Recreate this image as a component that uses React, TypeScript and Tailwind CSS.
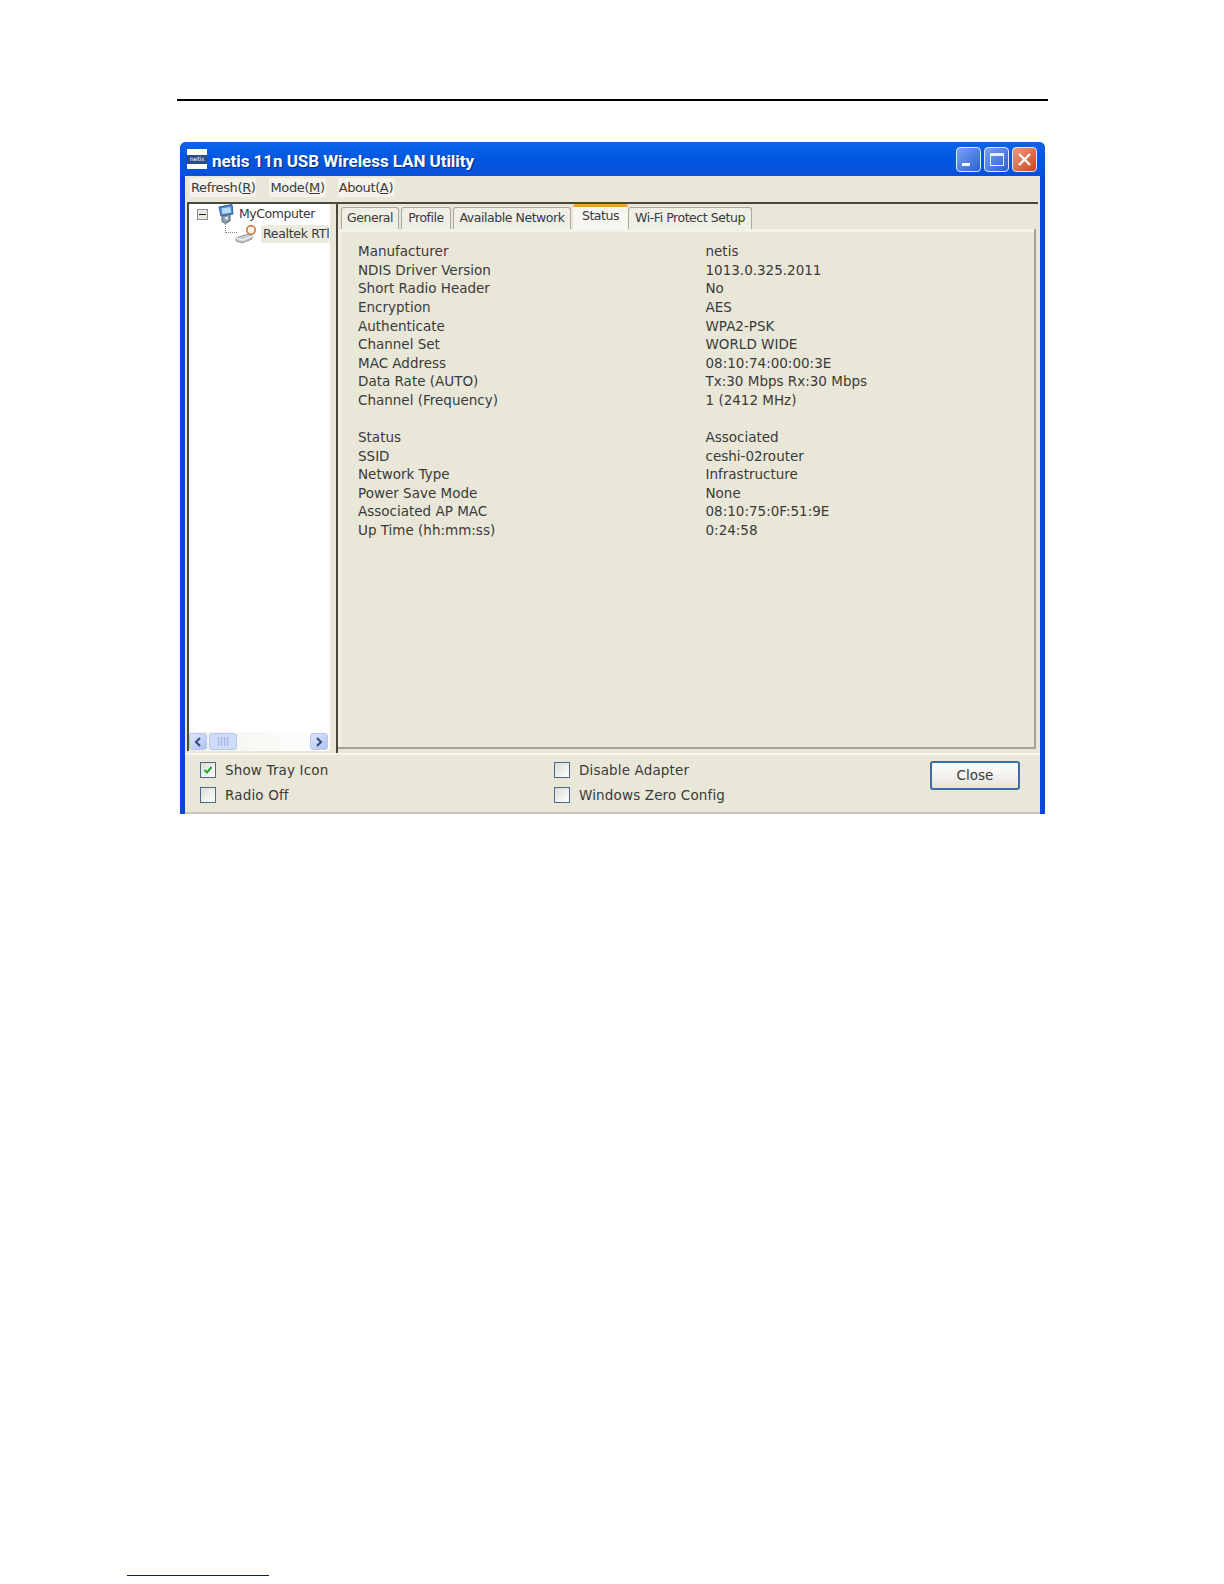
import React from "react";

const driverRows = [
  ["Manufacturer", "netis"],
  ["NDIS Driver Version", "1013.0.325.2011"],
  ["Short Radio Header", "No"],
  ["Encryption", "AES"],
  ["Authenticate", "WPA2-PSK"],
  ["Channel Set", "WORLD WIDE"],
  ["MAC Address", "08:10:74:00:00:3E"],
  ["Data Rate (AUTO)", "Tx:30 Mbps Rx:30 Mbps"],
  ["Channel (Frequency)", "1 (2412 MHz)"],
];

const linkRows = [
  ["Status", "Associated"],
  ["SSID", "ceshi-02router"],
  ["Network Type", "Infrastructure"],
  ["Power Save Mode", "None"],
  ["Associated AP MAC", "08:10:75:0F:51:9E"],
  ["Up Time (hh:mm:ss)", "0:24:58"],
];

function StatusRows({ rows }: { rows: string[][] }) {
  return (
    <div>
      {rows.map(([label, value]) => (
        <div key={label} className="flex h-[18.6px] items-center">
          <span className="w-[347.5px] shrink-0">{label}</span>
          <span>{value}</span>
        </div>
      ))}
    </div>
  );
}

function Tab({ label, width }: { label: string; width: string }) {
  return (
    <div className={`flex h-[22px] items-center justify-center rounded-t-[3px] border border-b-0 border-[#a9a89c] bg-[#f0efe6] whitespace-nowrap text-[12.5px] tracking-[-0.45px] ${width}`}>
      {label}
    </div>
  );
}

function Check({ label, checked, className }: { label: string; checked?: boolean; className?: string }) {
  return (
    <div className={`flex h-[20px] items-center ${className ?? ""}`}>
      <div className="flex h-4 w-4 items-center justify-center border border-[#4a6a8c] bg-linear-to-br from-[#dcdcd6] to-white">
        {checked && (
          <svg width="10" height="10" viewBox="0 0 10 10">
            <path d="M1.5 5 L4 7.5 L8.5 2" fill="none" stroke="#27a82e" strokeWidth="2" />
          </svg>
        )}
      </div>
      <span className="ml-[9px] whitespace-nowrap tracking-[0.15px]">{label}</span>
    </div>
  );
}

function CaptionButton({ className, children }: { className: string; children: React.ReactNode }) {
  return (
    <div className={`flex h-[25px] w-[25px] items-center justify-center rounded-[4px] border border-[#dfe8fb] ${className}`}>
      {children}
    </div>
  );
}

function ComputerIcon() {
  return (
    <svg width="18" height="20" viewBox="0 0 18 20" className="-my-px">
      <path d="M2 3 L15 0.5 L16 10 L4 12 Z" fill="#4f8ad6" stroke="#2f5f9e" />
      <path d="M4.5 4.5 L13.5 3 L14 8.5 L5.5 10 Z" fill="#b5dcf7" />
      <path d="M5 12 L13 10.5 L13 17 L8.5 19.5 L5 17.5 Z" fill="#8f9fb4" stroke="#55657c" />
      <rect x="8" y="13" width="3" height="2.5" fill="#dfe8f2" />
    </svg>
  );
}

function AdapterIcon() {
  return (
    <svg width="26" height="20" viewBox="0 0 26 20">
      <circle cx="17" cy="6" r="4.2" fill="#fff6ec" stroke="#cf6a2a" strokeWidth="1.5" />
      <path d="M14 10 L18 12 L18 15 L8 19 L2 17 L2 14 Z" fill="#c9cbd0" stroke="#7d8087" strokeWidth="0.8" />
      <path d="M2 14 L9 16 L18 12" fill="none" stroke="#ffffff" strokeWidth="1" />
    </svg>
  );
}

function ScrollArrow({ d, className }: { d: string; className?: string }) {
  return (
    <div className={`flex h-[17px] w-[18px] items-center justify-center rounded-[3px] border border-[#b4c6ee] bg-linear-to-br from-[#dfe8fd] to-[#adc2f2] ${className ?? ""}`}>
      <svg width="8" height="10" viewBox="0 0 8 10">
        <path d={d} fill="none" stroke="#33497c" strokeWidth="2" />
      </svg>
    </div>
  );
}

export default function App() {
  return (
    <div className="flex h-[1584px] w-[1224px] flex-col overflow-hidden bg-white pt-[99px] pl-[177px] text-[13.5px] text-[#3a3a3a] font-['DejaVu_Sans',sans-serif]">
      {/* page rule */}
      <div className="h-[2px] w-[871px] bg-black" />

      {/* window */}
      <div className="mt-[41px] ml-[3px] flex h-[672px] w-[865px] flex-col rounded-t-[6px] bg-[#0a46d8]">
        {/* title bar */}
        <div className="flex h-[34px] shrink-0 items-center rounded-t-[6px] bg-linear-to-b from-[#0b63ea] via-[#0058e0] to-[#0a50d8] pr-[8px] pl-[7px]">
          <div className="flex h-[20px] w-[20px] flex-col justify-center bg-white">
            <div className="flex h-[9px] items-center justify-center bg-[#2b4a86] text-[6px] leading-none text-white">netis</div>
          </div>
          <span className="mt-[5px] ml-[5px] font-['Roboto',sans-serif] text-[17px] font-bold tracking-[-0.05px] text-white [text-shadow:1px_1px_1px_#0a2a80]">netis 11n USB Wireless LAN Utility</span>
          <div className="ml-auto flex gap-[3px]">
            <CaptionButton className="bg-linear-to-br from-[#7ba2ee] to-[#2a5fd8]">
              <div className="mt-[11px] mr-[5px] h-[3px] w-[8px] bg-white" />
            </CaptionButton>
            <CaptionButton className="bg-linear-to-br from-[#7ba2ee] to-[#2a5fd8]">
              <div className="h-[13px] w-[14px] border border-t-[3px] border-[#e8effc]" />
            </CaptionButton>
            <CaptionButton className="bg-linear-to-br from-[#ee9a7c] to-[#d03e14]">
              <svg width="15" height="15" viewBox="0 0 15 15">
                <path d="M2 2 L13 13 M13 2 L2 13" stroke="#fff" strokeWidth="2.4" />
              </svg>
            </CaptionButton>
          </div>
        </div>

        {/* client area */}
        <div className="mx-[5px] flex h-[638px] flex-col bg-[#e9e7d8]">
          {/* menu */}
          <div className="flex h-[26px] shrink-0 items-center pb-[3px] pl-[5px] text-[13px] tracking-[-0.38px]">
            <span className="bg-[#f4f3ec] px-[1px]">Refresh(<u>R</u>)</span>
            <span className="ml-[13px] bg-[#f4f3ec] px-[1px]">Mode(<u>M</u>)</span>
            <span className="ml-[12px] bg-[#f4f3ec] px-[1px]">About(<u>A</u>)</span>
          </div>

          <div className="mx-[2px] flex h-[551px] shrink-0 border-t-2 border-[#4a483c]">
            {/* tree */}
            <div className="mb-[2px] flex w-[143px] shrink-0 flex-col border-l-2 border-[#4a483c] bg-white">
              <div className="flex-1 overflow-hidden">
                <div className="flex h-[20px] items-center pl-[8px] text-[12.5px] tracking-[-0.45px]">
                  <div className="flex h-[11px] w-[11px] items-center justify-center border border-[#8a8f9a] bg-[#eceae0]">
                    <div className="h-px w-[7px] bg-[#222]" />
                  </div>
                  <div className="ml-[9px]"><ComputerIcon /></div>
                  <span className="ml-[4px] whitespace-nowrap">MyComputer</span>
                </div>
                <div className="flex h-[20px] items-center overflow-hidden pl-[36px] text-[12.5px] tracking-[-0.3px]">
                  <div className="h-[9px] w-[12px] shrink-0 self-start border-b border-l border-dotted border-[#8a8a8a]" />
                  <div className="-ml-[3px] shrink-0"><AdapterIcon /></div>
                  <span className="ml-[1px] bg-[#ecebe0] pl-[2px] whitespace-nowrap">Realtek RTl</span>
                </div>
              </div>
              {/* scrollbar */}
              <div className="flex h-[19px] items-center bg-linear-to-r from-[#f3f2ec] to-white pr-[2px]">
                <ScrollArrow d="M6 1 L2 5 L6 9" />
                <div className="ml-[2px] flex h-[17px] w-[28px] items-center justify-center rounded-[3px] border border-[#b4c6ee] bg-[#cfdcf8] text-[9px] leading-none text-[#8aa0d0]">
                  ||||
                </div>
                <ScrollArrow d="M2 1 L6 5 L2 9" className="ml-auto" />
              </div>
            </div>

            {/* tabs and status page */}
            <div className="ml-[6px] flex min-w-0 flex-1 flex-col border-l-2 border-[#4a483c] pt-[1px]">
              <div className="flex h-[24px] shrink-0 items-end gap-[2px] pl-[3px]">
                <Tab label="General" width="w-[58px]" />
                <Tab label="Profile" width="w-[50px]" />
                <Tab label="Available Network" width="w-[118px]" />
                <div className="relative z-10 -mb-px flex h-[26px] w-[55px] items-center justify-center rounded-t-[3px] border-t-[3px] border-[#f0a030] bg-[#f7f6f0] pb-[4px] text-[12.5px] tracking-[-0.45px]">
                  Status
                </div>
                <Tab label="Wi-Fi Protect Setup" width="w-[124px] -ml-[2px]" />
              </div>
              <div className="mr-[2px] mb-[4px] flex-1 border-r-2 border-b-2 border-[#a3a296] bg-[#e9e7d8] pt-[13px] pl-[20px] shadow-[inset_3px_3px_0_#f3f2e9]">
                <StatusRows rows={driverRows} />
                <div className="h-[18.6px]" />
                <StatusRows rows={linkRows} />
              </div>
            </div>
          </div>

          {/* bottom controls */}
          <div className="flex flex-1 border-t-2 border-[#f6f5ee] pt-[5px] pl-[15px]">
            <div className="flex w-[354px] shrink-0 flex-col gap-[5px]">
              <Check label="Show Tray Icon" checked />
              <Check label="Radio Off" />
            </div>
            <div className="flex flex-col gap-[5px]">
              <Check label="Disable Adapter" />
              <Check label="Windows Zero Config" />
            </div>
            <div className="mt-[1px] mr-[20px] ml-auto flex h-[29px] w-[90px] items-center justify-center rounded-[3px] border-2 border-[#3c6ea4] bg-linear-to-b from-white to-[#e6e4da]">
              Close
            </div>
          </div>
          <div className="h-[2px] shrink-0 bg-[#c8c7bc]" />
        </div>
      </div>

      {/* footnote rule */}
      <div className="mt-auto mb-[8px] -ml-[50px] h-px w-[142px] bg-[#10108c]" />
    </div>
  );
}
